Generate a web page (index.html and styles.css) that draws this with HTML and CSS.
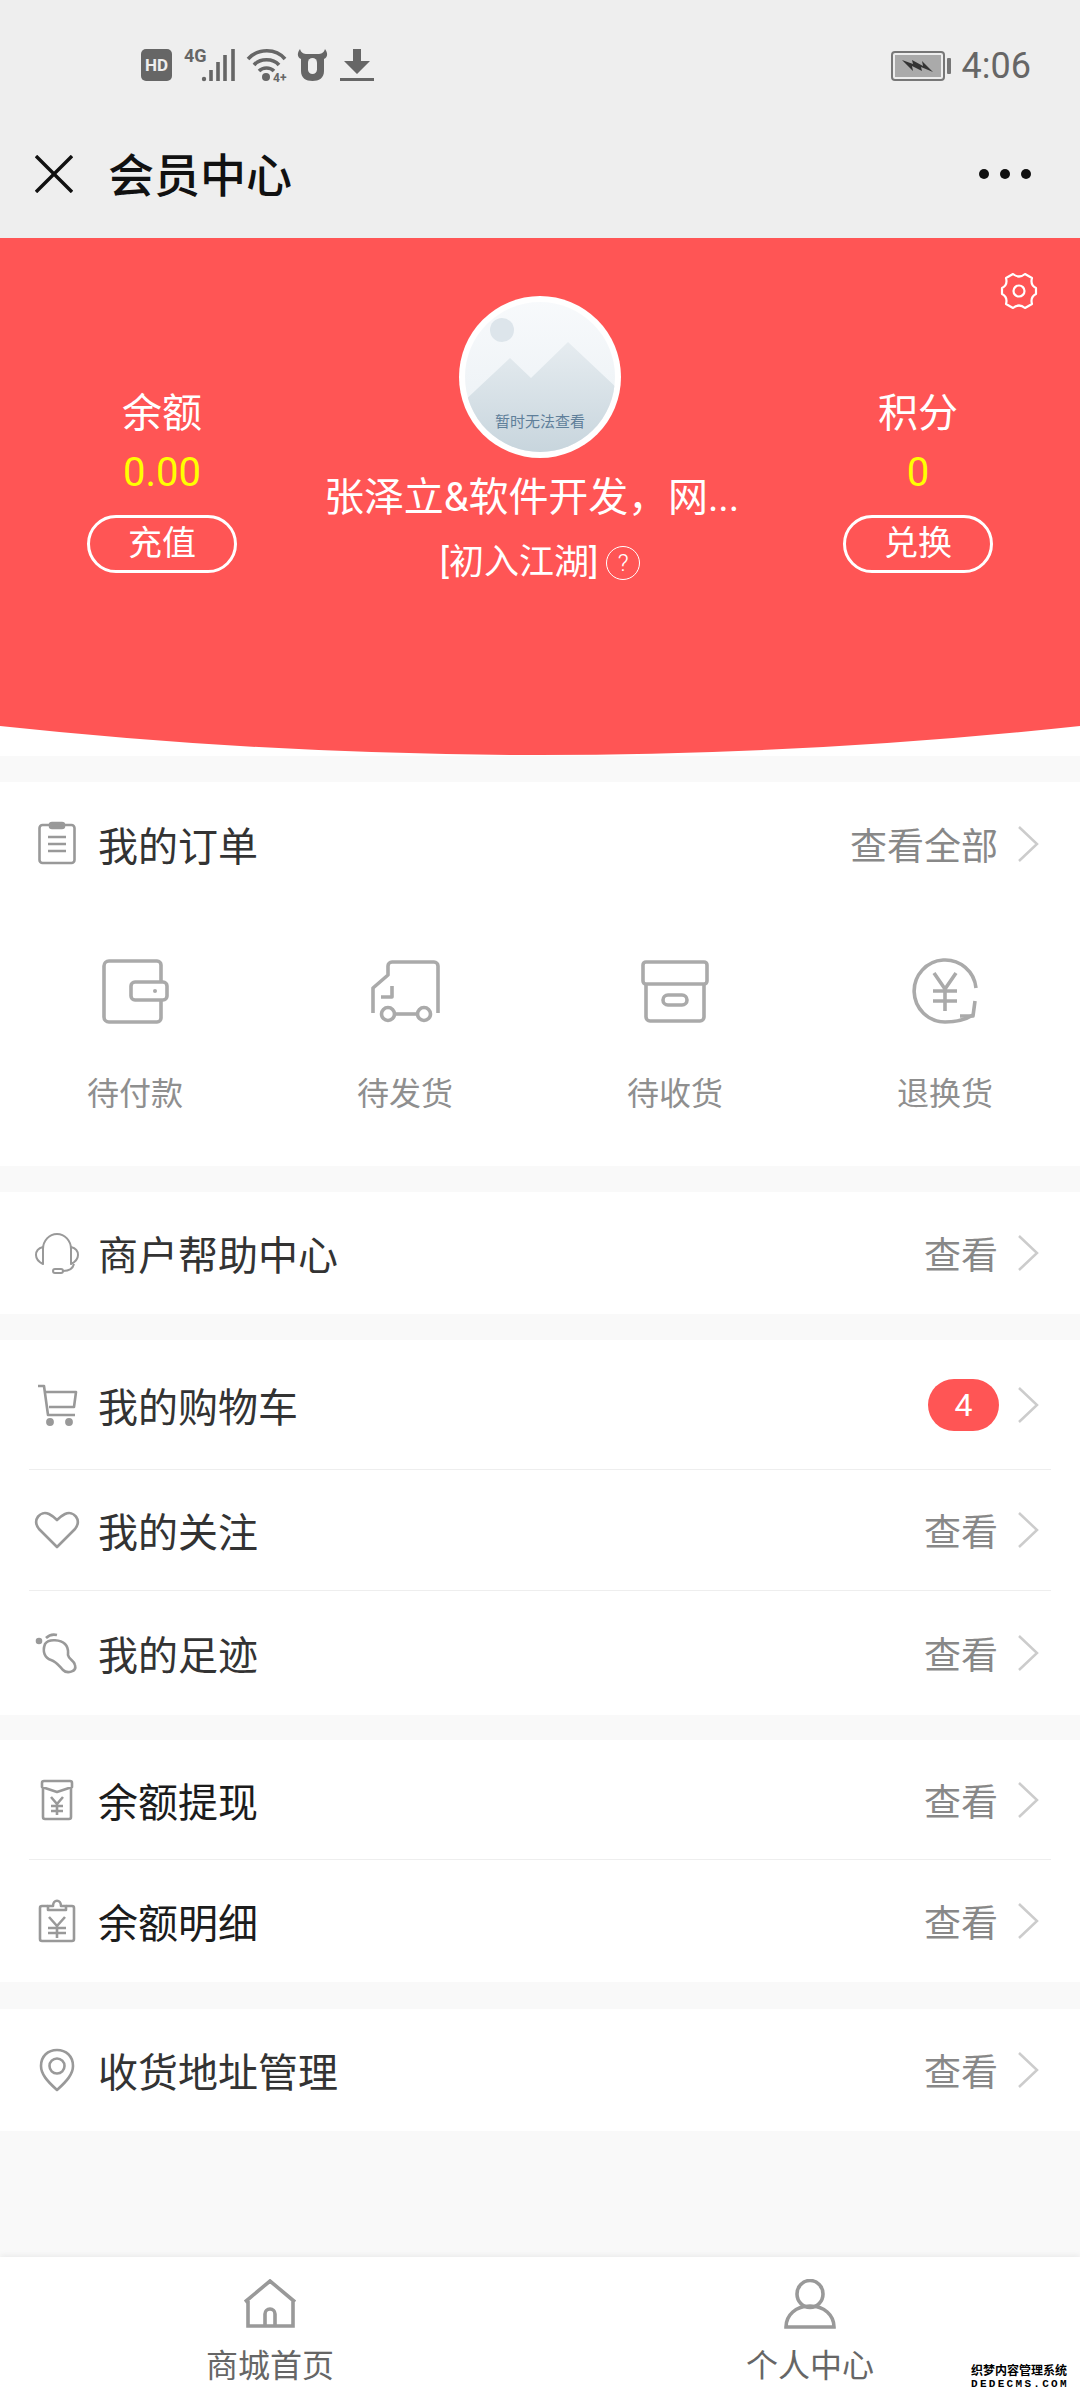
FILE: index.html
```html
<!DOCTYPE html>
<html lang="zh-CN">
<head>
  <meta charset="UTF-8" />
  <meta name="viewport" content="width=device-width, initial-scale=1.0"/>
  <title>会员中心</title>
  <link rel="stylesheet" href="styles.css">
</head>
<body>
  <div class="status-bar">
    <div class="status-left">
      <span class="hd">HD</span>
      <svg class="st-signal" width="54" height="38" viewBox="0 0 54 38">
        <text x="0" y="18" class="net">4G</text>
        <circle cx="20" cy="35" r="2.2" fill="#666"/>
        <path d="M27 37V26M34 37V18M41 37V11M49 37V5" stroke="#666" stroke-width="3.6" fill="none"/>
      </svg>
      <svg class="st-wifi" width="41" height="38" viewBox="0 0 41 38">
        <path d="M2 11C12 0 30 0 39 11M8 17C14 10 27 10 33 17M13 23C17 19 24 19 28 23" stroke="#666" stroke-width="3.6" fill="none"/>
        <circle cx="20" cy="29" r="4" fill="#666"/>
        <text x="27" y="34" class="net-small">4+</text>
      </svg>
      <svg class="st-bull" width="31" height="34" viewBox="0 0 31 34">
        <path d="M3 1C0 5 0 9 4 11V23C4 30 9 33 15.500 33C22 33 27 30 27 23V11C31 9 31 5 28 1C27 5 24 6 21 6H10C7 6 4 5 3 1Z" fill="#666"/>
        <rect x="11" y="10" width="9" height="16" rx="4.500" fill="#eee"/>
      </svg>
      <svg class="st-down" width="34" height="34" viewBox="0 0 34 34">
        <path d="M13 1H21V13H30L17 26L4 13H13Z" fill="#666"/>
        <rect x="0" y="30" width="34" height="3" fill="#666"/>
      </svg>
    </div>
    <div class="status-right">
      <svg width="60" height="30" viewBox="0 0 60 30">
        <rect x="1" y="1" width="52" height="28" rx="3" fill="none" stroke="#777" stroke-width="2"/>
        <rect x="4" y="4" width="46" height="22" fill="#aaa"/>
        <rect x="56" y="7" width="4" height="16" rx="1" fill="#777"/>
        <path d="M11 9L22 13L21 9L32 15L31 10L42 21L30 16L31 20L21 15L22 20Z" fill="#333"/>
      </svg>
      <span class="clock">4:06</span>
    </div>
  </div>

  <header class="nav">
    <svg class="nav-close" width="38" height="38" viewBox="0 0 38 38">
      <path d="M1 1L37 37M37 1L1 37" stroke="#111" stroke-width="3.4" fill="none"/>
    </svg>
    <h1 class="nav-title">会员中心</h1>
    <div class="nav-more"><i></i><i></i><i></i></div>
  </header>

  <section class="hero">
    <svg class="hero-gear" width="40" height="40" viewBox="0 0 40 40">
      <path d="M14 3Q20 8 26 3L33 7Q31 14 37 17V23Q31 26 33 33L26 37Q20 32 14 37L7 33Q9 26 3 23V17Q9 14 7 7Z" fill="none" stroke="#fff" stroke-width="2.200" stroke-linejoin="round"/>
      <circle cx="20" cy="20" r="5.500" fill="none" stroke="#fff" stroke-width="2.200"/>
    </svg>

    <div class="hero-side">
      <div class="hero-label">余额</div>
      <div class="hero-value">0.00</div>
      <div class="hero-btn">充值</div>
    </div>

    <div class="hero-center">
      <svg class="avatar" width="162" height="162" viewBox="0 0 162 162">
        <defs>
          <linearGradient id="skyFill" x1="0" y1="0" x2="0" y2="1">
            <stop offset="0" stop-color="#f8fafc"/>
            <stop offset="1" stop-color="#e9eff3"/>
          </linearGradient>
          <linearGradient id="hillFill" x1="0" y1="0" x2="0" y2="1">
            <stop offset="0" stop-color="#e6ecf0"/>
            <stop offset="1" stop-color="#c6d4dc"/>
          </linearGradient>
          <clipPath id="avatarClip"><circle cx="81" cy="81" r="75"/></clipPath>
        </defs>
        <circle cx="81" cy="81" r="81" fill="#fff"/>
        <g clip-path="url(#avatarClip)">
          <rect width="162" height="162" fill="url(#skyFill)"/>
          <circle cx="43" cy="34" r="12" fill="#dde5eb"/>
          <path d="M0 110L51 62L72 82L109 46L162 96V162H0Z" fill="url(#hillFill)"/>
        </g>
        <text x="81" y="131" text-anchor="middle" class="avatar-text">暂时无法查看</text>
      </svg>
      <div class="hero-name">张泽立&amp;软件开发，网...</div>
      <div class="hero-level">
        <span>[初入江湖]</span>
        <span class="level-help">?</span>
      </div>
    </div>

    <div class="hero-side">
      <div class="hero-label">积分</div>
      <div class="hero-value">0</div>
      <div class="hero-btn">兑换</div>
    </div>

    <svg class="hero-curve" width="1080" height="30" viewBox="0 0 1080 30" preserveAspectRatio="none">
      <path d="M0 0Q540 58 1080 0V30H0Z" fill="#fff"/>
    </svg>
  </section>

  <section class="card">
    <div class="row row-head">
      <span class="row-icon">
        <svg width="48" height="48" viewBox="0 0 48 48" class="ico">
          <rect x="6.500" y="5" width="35" height="38" rx="3"/>
          <rect x="17" y="3" width="14" height="5" rx="2" fill="#999"/>
          <path d="M15 17H33M15 24H33M15 31H33"/>
        </svg>
      </span>
      <span class="row-title">我的订单</span>
      <span class="row-more">查看全部</span>
      <svg class="chev" width="22" height="38" viewBox="0 0 22 38"><path d="M2 2L20 19L2 36"/></svg>
    </div>
    <div class="order-grid">
      <div class="order-item">
        <svg width="80" height="80" viewBox="0 0 80 80" class="ico-big">
          <path d="M66 30V14a4 4 0 0 0-4-4H14a5 5 0 0 0-5 5V66a5 5 0 0 0 5 5H62a4 4 0 0 0 4-4V50"/>
          <rect x="36" y="31" width="36" height="18" rx="4"/>
          <circle cx="60" cy="40" r="2" fill="#aaa" stroke="none"/>
        </svg>
        <span>待付款</span>
      </div>
      <div class="order-item">
        <svg width="80" height="80" viewBox="0 0 80 80" class="ico-big">
          <path d="M8 62V37L23 24V15a4 4 0 0 1 4-4H69a4 4 0 0 1 4 4V62"/>
          <path d="M27 35V46H16"/>
          <circle cx="23" cy="63" r="6.500"/>
          <circle cx="59" cy="63" r="6.500"/>
          <path d="M30 63H52"/>
        </svg>
        <span>待发货</span>
      </div>
      <div class="order-item">
        <svg width="80" height="80" viewBox="0 0 80 80" class="ico-big">
          <rect x="8" y="11" width="64" height="22" rx="3"/>
          <path d="M11 33V66a4 4 0 0 0 4 4H65a4 4 0 0 0 4-4V33"/>
          <rect x="28" y="44" width="24" height="10" rx="5"/>
        </svg>
        <span>待收货</span>
      </div>
      <div class="order-item">
        <svg width="80" height="80" viewBox="0 0 80 80" class="ico-big">
          <path d="M71 37A31 31 0 1 0 40 71C50 71 60 69 68 64"/>
          <path d="M70 50L68 65L55 65"/>
          <path d="M29 22L40 38L51 22M40 38V60M28 40H52M28 50H52"/>
        </svg>
        <span>退换货</span>
      </div>
    </div>
  </section>

  <section class="card">
    <div class="row row-help">
      <span class="row-icon">
        <svg width="48" height="48" viewBox="0 0 48 48" class="ico ico-thin">
          <path d="M10 20A14 15 0 0 1 38 20"/>
          <path d="M10 18C6 19 3 22 3 26C3 30 6 33 10 35ZM38 18C42 19 45 22 45 26C45 30 42 33 38 35Z"/>
          <path d="M41 35C40 39 36 42 30 42"/>
          <rect x="20" y="40" width="10" height="4" rx="2"/>
        </svg>
      </span>
      <span class="row-title">商户帮助中心</span>
      <span class="row-more">查看</span>
      <svg class="chev" width="22" height="38" viewBox="0 0 22 38"><path d="M2 2L20 19L2 36"/></svg>
    </div>
  </section>

  <section class="card">
    <div class="row row-line row-tall">
      <span class="row-icon">
        <svg width="48" height="48" viewBox="0 0 48 48" class="ico">
          <path d="M5 5H11L15 34H42"/>
          <path d="M13 11H43L41 26H16"/>
          <circle cx="17" cy="41" r="2.600" fill="#999" stroke="none"/>
          <circle cx="36" cy="41" r="2.600" fill="#999" stroke="none"/>
        </svg>
      </span>
      <span class="row-title">我的购物车</span>
      <span class="badge">4</span>
      <svg class="chev" width="22" height="38" viewBox="0 0 22 38"><path d="M2 2L20 19L2 36"/></svg>
    </div>
    <div class="row row-line">
      <span class="row-icon">
        <svg width="48" height="48" viewBox="0 0 48 48" class="ico">
          <path d="M24 41L6 23C-1 14 7 4 16 8C20 10 22 12 24 14C26 12 28 10 32 8C41 4 49 14 42 23Z"/>
        </svg>
      </span>
      <span class="row-title">我的关注</span>
      <span class="row-more">查看</span>
      <svg class="chev" width="22" height="38" viewBox="0 0 22 38"><path d="M2 2L20 19L2 36"/></svg>
    </div>
    <div class="row row-end">
      <span class="row-icon">
        <svg width="48" height="48" viewBox="0 0 48 48" class="ico">
          <circle cx="6" cy="12" r="2" fill="#999" stroke="none"/>
          <path d="M13 9C16 6 20 5 24 6" stroke-width="3.600"/>
          <path d="M12 15C9 23 12 29 18 31C24 33 26 37 30 41C34 45 44 43 42 36C41 31 36 31 35 26C35 22 36 19 32 15C28 11 16 9 12 15Z"/>
        </svg>
      </span>
      <span class="row-title">我的足迹</span>
      <span class="row-more">查看</span>
      <svg class="chev" width="22" height="38" viewBox="0 0 22 38"><path d="M2 2L20 19L2 36"/></svg>
    </div>
  </section>

  <section class="card card-tight">
    <div class="row row-line row-first">
      <span class="row-icon">
        <svg width="48" height="48" viewBox="0 0 48 48" class="ico">
          <path d="M10 12V41a2 2 0 0 0 2 2H36a2 2 0 0 0 2-2V12"/>
          <path d="M9 11V7a2 2 0 0 1 2-2H37a2 2 0 0 1 2 2V11L24 16Z"/>
          <path d="M18 21L24 28L30 21M24 28V39M18 30H30M18 35H30" stroke-width="2.200"/>
        </svg>
      </span>
      <span class="row-title row-title-dark">余额提现</span>
      <span class="row-more">查看</span>
      <svg class="chev" width="22" height="38" viewBox="0 0 22 38"><path d="M2 2L20 19L2 36"/></svg>
    </div>
    <div class="row row-second">
      <span class="row-icon">
        <svg width="48" height="48" viewBox="0 0 48 48" class="ico">
          <path d="M15 9H9a2 2 0 0 0-2 2V42a2 2 0 0 0 2 2H39a2 2 0 0 0 2-2V11a2 2 0 0 0-2-2H33"/>
          <path d="M15 13V9H20C20 2 28 2 28 9H33V13Z"/>
          <path d="M16 20L24 29L32 20M24 29V41M15 31H33M15 36H33" stroke-width="1.600"/>
        </svg>
      </span>
      <span class="row-title row-title-dark">余额明细</span>
      <span class="row-more">查看</span>
      <svg class="chev" width="22" height="38" viewBox="0 0 22 38"><path d="M2 2L20 19L2 36"/></svg>
    </div>
  </section>

  <section class="card card-loose">
    <div class="row row-help">
      <span class="row-icon">
        <svg width="48" height="48" viewBox="0 0 48 48" class="ico">
          <path d="M24 44C14 35 8 28 8 20C8 10 15 4 24 4C33 4 40 10 40 20C40 28 34 35 24 44Z"/>
          <circle cx="24" cy="20" r="7.500"/>
        </svg>
      </span>
      <span class="row-title">收货地址管理</span>
      <span class="row-more">查看</span>
      <svg class="chev" width="22" height="38" viewBox="0 0 22 38"><path d="M2 2L20 19L2 36"/></svg>
    </div>
  </section>

  <footer class="tabbar">
    <div class="tab">
      <svg width="54" height="50" viewBox="0 0 54 50" class="ico-tab">
        <path d="M5 22V47H50V22M2 23L27 2L52 23"/>
        <path d="M22 47V35a5 5 0 0 1 10 0V47"/>
      </svg>
      <span>商城首页</span>
    </div>
    <div class="tab">
      <svg width="54" height="50" viewBox="0 0 54 50" class="ico-tab">
        <ellipse cx="27" cy="15" rx="13" ry="13.500"/>
        <path d="M3 48C3 36 13 27 27 27C41 27 51 36 51 48Z"/>
      </svg>
      <span>个人中心</span>
    </div>
    <div class="watermark">
      <div>织梦内容管理系统</div>
      <div class="watermark-en">DEDECMS.COM</div>
    </div>
  </footer>
</body>
</html>
```

FILE: styles.css
```css
* {
  box-sizing: border-box;
}

html, body {
  margin: 0;
  padding: 0;
}

body {
  width: 1080px;
  height: 2400px;
  display: flex;
  flex-direction: column;
  overflow: hidden;
  background: #f9f9f9;
  color: #333;
  font-family: Roboto, "Noto Sans CJK SC", sans-serif;
}

/* status bar */
.status-bar {
  height: 112px;
  padding: 48px 49px 0 141px;
  display: flex;
  justify-content: space-between;
  align-items: flex-start;
  background: #eee;
}

.status-left {
  display: flex;
  align-items: flex-start;
}

.hd {
  width: 31px;
  height: 32px;
  margin-top: 1px;
  border-radius: 5px;
  background: #666;
  color: #eee;
  font-size: 17px;
  font-weight: 700;
  line-height: 32px;
  text-align: center;
}

.st-signal {
  margin-left: 12px;
  margin-top: -4px;
}

.st-wifi {
  margin-left: 8px;
}

.st-bull {
  margin-left: 10px;
}

.st-down {
  margin-left: 12px;
}

.net {
  font-size: 18px;
  font-weight: 700;
  fill: #666;
}

.net-small {
  font-size: 12px;
  font-weight: 700;
  fill: #666;
}

.status-right {
  display: flex;
  align-items: center;
  gap: 11px;
  margin-top: 3px;
}

.clock {
  font-size: 36px;
  line-height: 30px;
  color: #666;
}

/* nav */
.nav {
  height: 126px;
  padding: 0 49px 0 35px;
  display: flex;
  align-items: center;
  background: #eee;
}

.nav-close {
  margin-bottom: 2px;
}

.nav-title {
  flex: 1;
  margin: 0 0 6px 35px;
  font-size: 46px;
  font-weight: 500;
  color: #111;
}

.nav-more {
  display: flex;
  gap: 11px;
  margin-bottom: 2px;
}

.nav-more i {
  width: 10px;
  height: 10px;
  border-radius: 50%;
  background: #111;
}

/* red block */
.hero {
  position: relative;
  height: 518px;
  padding-top: 58px;
  display: flex;
  background: #ff5555;
  color: #fff;
}

.hero-gear {
  position: absolute;
  top: 33px;
  right: 41px;
}

.hero-curve {
  position: absolute;
  left: 0;
  bottom: 0;
}

.hero-side {
  width: 324px;
  padding-top: 90px;
  display: flex;
  flex-direction: column;
  align-items: center;
}

.hero-label {
  font-size: 40px;
  line-height: 56px;
}

.hero-value {
  margin-top: 3px;
  font-size: 40px;
  line-height: 56px;
  color: #ffff00;
}

.hero-btn {
  width: 150px;
  height: 58px;
  margin-top: 14px;
  border: 3px solid #fff;
  border-radius: 29px;
  font-size: 34px;
  line-height: 50px;
  text-align: center;
}

.hero-center {
  width: 432px;
  display: flex;
  flex-direction: column;
  align-items: center;
}

.avatar {
  display: block;
}

.avatar-text {
  font-size: 15px;
  fill: #5f7f9a;
}

.hero-name {
  align-self: flex-start;
  margin-top: 12px;
  font-size: 40px;
  line-height: 56px;
  letter-spacing: -0.1px;
  white-space: nowrap;
}

.hero-level {
  margin-top: 12px;
  display: flex;
  align-items: center;
  gap: 8px;
  font-size: 35px;
  line-height: 50px;
}

.level-help {
  width: 34px;
  height: 34px;
  border: 1px solid #fff;
  border-radius: 50%;
  font-size: 24px;
  font-weight: 300;
  line-height: 32px;
  text-align: center;
}

/* white cards */
.card {
  margin-top: 26px;
  background: #fff;
}

.card-tight {
  margin-top: 25px;
}

.card-loose {
  margin-top: 27px;
}

.row {
  height: 120px;
  margin: 0 29px;
  padding: 0 12px 0 4px;
  display: flex;
  align-items: center;
  font-size: 40px;
}

.row-head {
  height: 123px;
}

.row-help {
  height: 122px;
}

.row-line {
  height: 121px;
  border-bottom: 1px solid #eee;
}

.row-tall {
  height: 130px;
}

.row-end {
  height: 124px;
}

.row-first {
  height: 120px;
}

.row-second {
  height: 122px;
}

.row-icon {
  width: 48px;
  height: 48px;
  margin-right: 17px;
}

.row-title {
  flex: 1;
  color: #333;
}

.row-title-dark {
  color: #1c1c1c;
}

.row-more {
  margin-right: 19px;
  font-size: 37px;
  color: #888;
}

.badge {
  width: 71px;
  height: 52px;
  margin-right: 18px;
  border-radius: 26px;
  background: #ff5555;
  color: #fff;
  font-size: 32px;
  line-height: 52px;
  text-align: center;
}

.chev path {
  fill: none;
  stroke: #ccc;
  stroke-width: 2.5;
}

.ico * {
  fill: none;
  stroke: #999;
  stroke-width: 2.6;
  stroke-linejoin: round;
}

.ico [fill="#999"] {
  fill: #999;
}

.ico-thin * {
  stroke-width: 2;
}

/* order grid */
.order-grid {
  padding: 46px 0 50px;
  display: grid;
  grid-template-columns: repeat(4, 1fr);
}

.order-item {
  display: flex;
  flex-direction: column;
  align-items: center;
  gap: 41px;
  font-size: 32px;
  line-height: 44px;
  color: #8f8f8f;
}

.ico-big * {
  fill: none;
  stroke: #aaa;
  stroke-width: 3.6;
  stroke-linejoin: round;
}

.ico-big circle[stroke="none"] {
  fill: #aaa;
  stroke: none;
}

/* bottom tabs */
.tabbar {
  position: relative;
  height: 143px;
  margin-top: auto;
  padding-top: 22px;
  display: flex;
  background: #fff;
  box-shadow: 0 -2px 6px rgba(0, 0, 0, 0.06);
}

.tab {
  width: 540px;
  display: flex;
  flex-direction: column;
  align-items: center;
  gap: 15px;
  font-size: 32px;
  line-height: 44px;
  color: #666;
}

.ico-tab * {
  fill: none;
  stroke: #999;
  stroke-width: 3.6;
}

.watermark {
  position: absolute;
  right: 11px;
  bottom: 9px;
  width: 98px;
  background: #fff;
  color: #000;
  font-size: 12px;
  font-weight: 700;
  line-height: 13px;
  white-space: nowrap;
}

.watermark-en {
  font-family: "Liberation Mono", monospace;
  font-size: 11px;
  letter-spacing: 2.300px;
}
```
